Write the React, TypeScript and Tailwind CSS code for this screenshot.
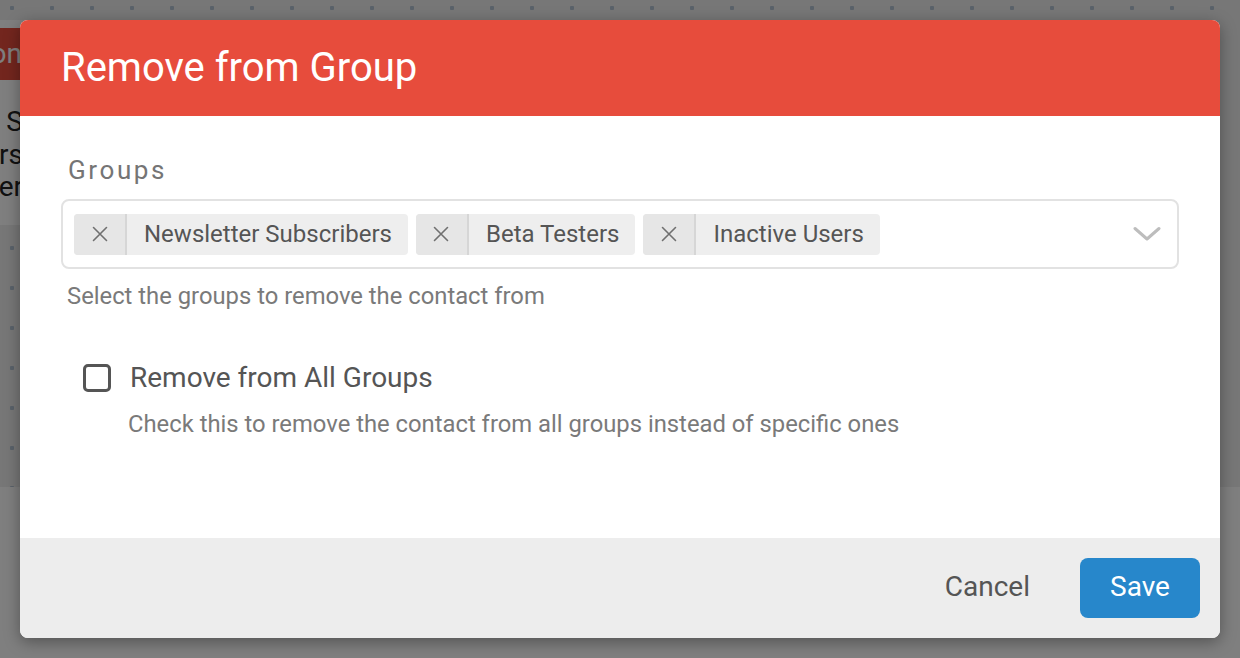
import React from "react";

const font = { fontFamily: "Roboto, 'Noto Sans', sans-serif" };

function Chip({ label }: { label: string }) {
  return (
    <div className="flex h-[41px] items-stretch rounded-[4px] bg-[#eeeeee]">
      <div className="flex w-[53px] items-center justify-center rounded-l-[4px] border-r-2 border-[#d6d6d6] bg-[#e6e6e6]">
        <svg width="16" height="16" viewBox="0 0 16 16" fill="none" stroke="#707070" strokeWidth="1.6" strokeLinecap="round">
          <path d="M1.5 1.5 L14.5 14.5 M14.5 1.5 L1.5 14.5" />
        </svg>
      </div>
      <div className="flex items-center pl-[17px] pr-[16px] text-[24px] text-[#555555]">{label}</div>
    </div>
  );
}

export default function App() {
  return (
    <div className="relative h-[658px] w-[1240px] overflow-hidden bg-[#efefef]" style={font}>
      {/* background page */}
      <div className="flex h-full flex-col bg-[radial-gradient(circle_at_12px_8px,#b4c4d4_2px,transparent_2.5px)] bg-size-[40px_40px]">
        <div className="ml-[-280px] mt-[20px] flex h-[205px] w-[400px] flex-col bg-white">
          <div className="mt-[8px] flex h-[52px] w-[330px] items-center justify-end bg-[#e74c3c] pr-[28px] text-[28px] text-white">
            Action
          </div>
          <div className="mt-[26px] flex flex-col items-end pr-[97px] text-[28px] leading-[32.5px] text-[#222]">
            <span>Users S</span>
            <span>Testers</span>
            <span>Member</span>
          </div>
        </div>
        <div className="mt-[262px] flex-1 bg-white" />
      </div>

      {/* overlay */}
      <div className="absolute inset-0 flex items-center justify-center bg-black/50">
        <div className="flex h-[618px] w-[1200px] flex-col overflow-hidden rounded-[8px] bg-white shadow-[0_4px_16px_rgba(0,0,0,0.35)]">
          <div className="flex h-[96px] shrink-0 items-center bg-[#e74c3c] px-[41px] text-[40px] text-white">
            Remove from Group
          </div>
          <div className="flex flex-1 flex-col px-[41px] pt-[38px]">
            <div className="pl-[7px] text-[26px] leading-[32px] tracking-[0.1em] text-[#757575]">Groups</div>
            <div className="mt-[13px] flex h-[70px] items-center justify-between rounded-[8px] border-2 border-[#e2e2e2] pl-[11px] pr-[16px]">
              <div className="flex gap-[8px]">
                <Chip label="Newsletter Subscribers" />
                <Chip label="Beta Testers" />
                <Chip label="Inactive Users" />
              </div>
              <svg width="28" height="16" viewBox="0 0 28 16" fill="none" stroke="#bdbdbd" strokeWidth="3" strokeLinecap="round" strokeLinejoin="round">
                <path d="M2 2.5 L14 13 L26 2.5" />
              </svg>
            </div>
            <div className="mt-[13px] pl-[6px] text-[23.8px] leading-[28px] text-[#7a7a7a]">
              Select the groups to remove the contact from
            </div>
            <div className="mt-[51px] flex items-center gap-[19px] pl-[22px]">
              <div className="h-[28px] w-[28px] rounded-[5px] border-[3px] border-[#555555]" />
              <div className="text-[28px] leading-[34px] text-[#555555]">Remove from All Groups</div>
            </div>
            <div className="mt-[15px] pl-[67px] text-[23.8px] leading-[28px] text-[#7a7a7a]">
              Check this to remove the contact from all groups instead of specific ones
            </div>
          </div>
          <div className="flex h-[100px] shrink-0 items-center justify-end gap-[50px] bg-[#ededed] pb-[2px] pr-[20px]">
            <button className="text-[28px] leading-[34px] text-[#555555]">Cancel</button>
            <button className="mt-[2px] h-[60px] w-[120px] rounded-[8px] bg-[#2787cb] pb-[2px] text-[28px] leading-[34px] text-white">Save</button>
          </div>
        </div>
      </div>
    </div>
  );
}
